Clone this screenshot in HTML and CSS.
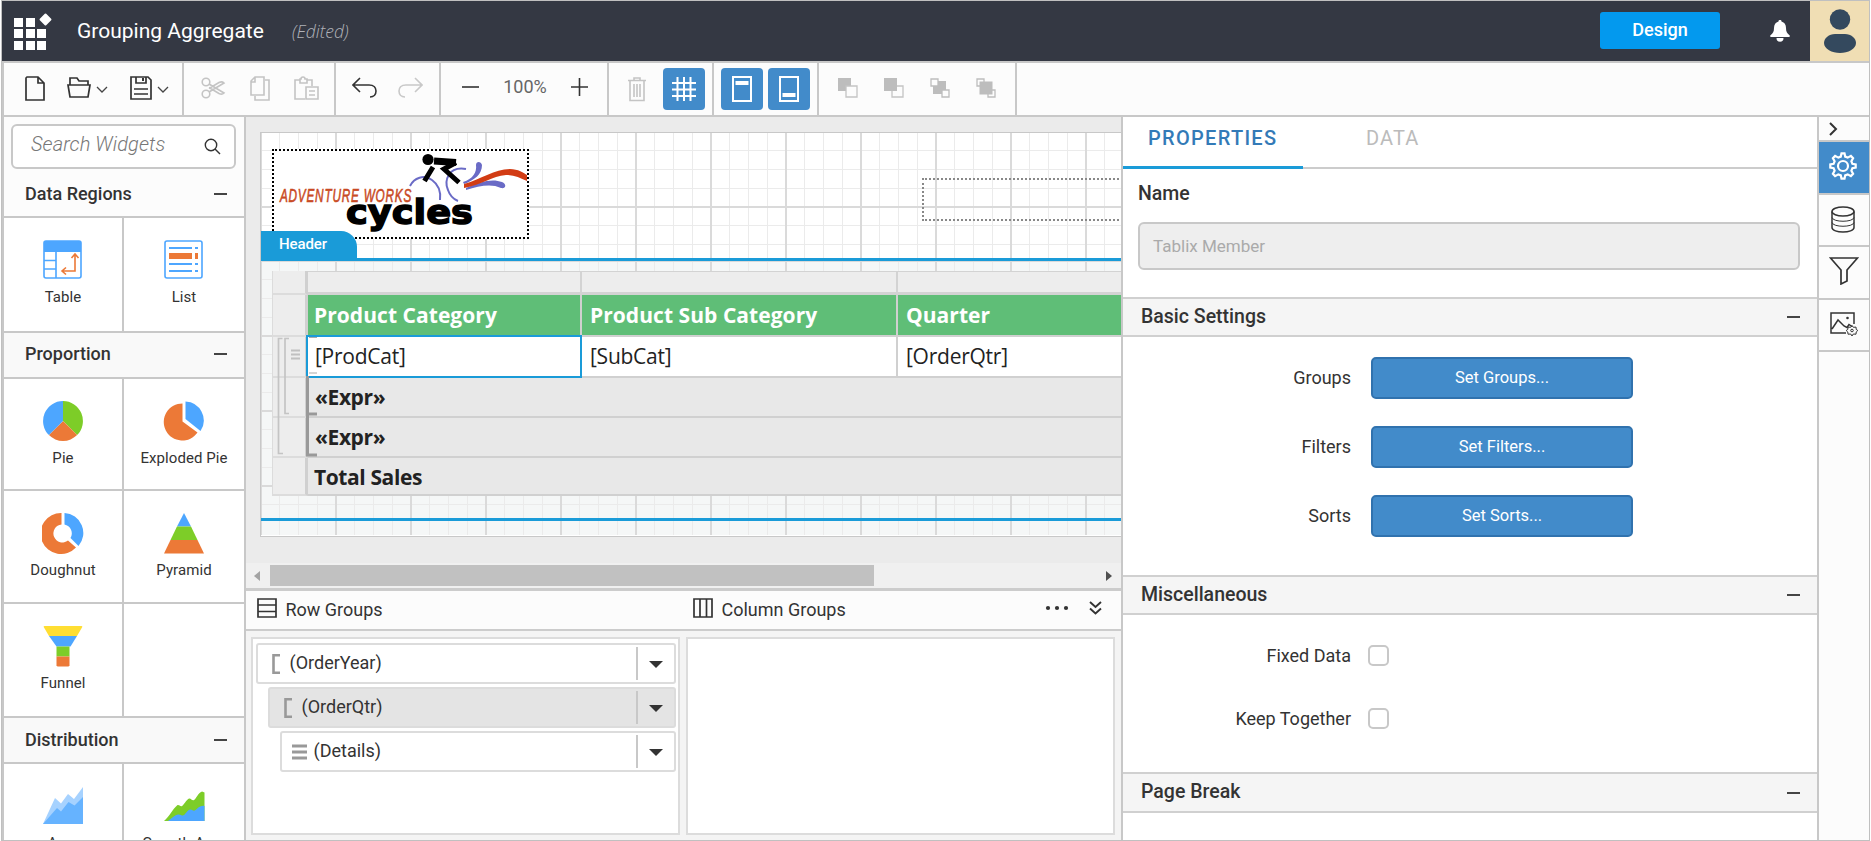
FILE: index.html
```html
<!DOCTYPE html>
<html lang="en">
<head>
<meta charset="utf-8">
<title>Grouping Aggregate</title>
<link rel="stylesheet" href="styles.css">
</head>
<body>
<div class="app">
  <header class="topbar">
    <svg class="brand" width="42" height="40" viewBox="0 0 42 40" fill="#fff"><path d="M2 6h9v9H2zM14 6h9v9h-9zM2 17h9v9H2zM14 17h9v9h-9zM25 17h9v9h-9zM2 29h9v9H2zM14 29h9v9h-9zM25 29h9v9h-9z"/><rect x="29" y="3" width="9" height="9" rx="1" transform="rotate(45 33.5 7.5)"/></svg>
    <h1 class="title">Grouping Aggregate</h1>
    <span class="edited">(Edited)</span>
    <button class="design">Design</button>
    <svg class="bell" width="20" height="22" viewBox="0 0 20 22" fill="#fff"><path d="M10 0c.9 0 1.500.5 1.500 1.400 3 .8 4.500 3.300 4.500 6.600 0 3.600 1 5.500 3.500 7.200.5.500.4 1.800-.5 1.800H1c-.9 0-1-1.300-.5-1.800C3 13.500 4 11.600 4 8c0-3.300 1.500-5.800 4.500-6.600C8.500.5 9.100 0 10 0z"/><path d="M6.500 18h7a3.500 3.800 0 0 1-7 0z"/></svg>
    <div class="avatar"><svg width="59" height="60" viewBox="0 0 59 60" fill="#34495e"><circle cx="30" cy="18.500" r="10.200"/><path d="M25 33h10c6 0 11 4 11 9 0 6-8 10-16 10s-16-4-16-10c0-5 5-9 11-9z"/></svg></div>
  </header>

  <nav class="toolbar">
    <div class="tools file">
      <svg width="20" height="25" viewBox="0 0 20 25" class="ink"><path d="M2 1h11l6 6v17H1V2zM13 1v6h6"/></svg>
      <svg class="open" width="24" height="22" viewBox="0 0 24 22"><path d="M3 8V1h7l2 3h9v4M1 8h22l-2 12H3z" fill="none" stroke="#333" stroke-width="1.700"/></svg>
      <svg class="caret" width="12" height="8" viewBox="0 0 12 8"><path d="M1 1l5 5 5-5" fill="none" stroke="#444" stroke-width="1.300"/></svg>
      <svg class="save" width="22" height="24" viewBox="0 0 22 24"><path d="M1 1h17l3 3v19H1zM6 1v6h10V1M4 13h14M4 18h14" fill="none" stroke="#333" stroke-width="1.700"/><path d="M13 2v3" stroke="#333" stroke-width="2"/></svg>
      <svg class="caret" width="12" height="8" viewBox="0 0 12 8"><path d="M1 1l5 5 5-5" fill="none" stroke="#444" stroke-width="1.300"/></svg>
    </div>
    <div class="tools clip">
      <svg width="25" height="22" viewBox="0 0 25 22" class="dim"><circle cx="5" cy="5" r="3.800"/><circle cx="5" cy="17" r="3.800"/><path d="M8 7l15 9c-1.500 1.500-3 1.500-5 .5L8 10.500M8 15l15-9c-1.500-1.500-3-1.500-5-.5L8 11.500"/></svg>
      <svg width="20" height="25" viewBox="0 0 20 25" class="dim"><path d="M5 1h9v18H1V5zM5 1v5H1M15 4h4v20H5v-4"/></svg>
      <svg width="25" height="25" viewBox="0 0 25 25" class="dim"><path d="M6 4H1v19h10M13 4h5v6M6 7h7V3h-2a2 2 0 0 0-4 0H6zM12 11h12v12H12zM15 15h6M15 19h6"/></svg>
    </div>
    <div class="tools hist">
      <svg width="25" height="22" viewBox="0 0 25 22" class="thin"><path d="M8 1L1 8l7 7M1 8h16c5 0 7 3 7 6s-2 6-6 6"/></svg>
      <svg width="25" height="22" viewBox="0 0 25 22" class="thin faded"><path d="M17 1l7 7-7 7M24 8H8c-5 0-7 3-7 6s2 6 6 6"/></svg>
    </div>
    <div class="tools zoomer">
      <svg width="17" height="18" viewBox="0 0 17 18"><path d="M0 9h17" stroke="#333" stroke-width="1.600"/></svg>
      <span class="pct">100%</span>
      <svg width="18" height="18" viewBox="0 0 18 18"><path d="M0 9h17M8.500 0v18" stroke="#333" stroke-width="1.600"/></svg>
    </div>
    <div class="tools view">
      <svg width="18" height="25" viewBox="0 0 18 25" class="dim"><path d="M0 3.500h18M6 3V1h6v2M2 4v19.500h14V4M6 7v13M9 7v13M12 7v13"/></svg>
      <span class="on"><svg width="26" height="26" viewBox="0 0 26 26"><path d="M6.500 1v24M13 1v24M19.500 1v24M1 7h24M1 13.500h24M1 20h24" stroke="#fff" stroke-width="2"/></svg></span>
    </div>
    <div class="tools bands">
      <span class="on"><svg width="20" height="26" viewBox="0 0 20 26"><path d="M1 1h18v24H1z" fill="none" stroke="#fff" stroke-width="2"/><path d="M3.500 5h13v4h-13z" fill="#fff"/></svg></span>
      <span class="on"><svg width="20" height="26" viewBox="0 0 20 26"><path d="M1 1h18v24H1z" fill="none" stroke="#fff" stroke-width="2"/><path d="M3.500 17h13v4h-13z" fill="#fff"/></svg></span>
    </div>
    <div class="tools order">
      <svg width="20" height="20" viewBox="0 0 20 20"><path d="M0 0h13v13H0z" fill="#bdbdbd"/><path d="M8 8h11v11H8z" fill="#fcfcfc" stroke="#c4c4c4" stroke-width="1.300"/></svg>
      <svg width="20" height="20" viewBox="0 0 20 20"><path d="M8 8h11v11H8z" fill="#fcfcfc" stroke="#c4c4c4" stroke-width="1.300"/><path d="M0 0h13v13H0z" fill="#bdbdbd"/></svg>
      <svg width="20" height="20" viewBox="0 0 20 20"><path d="M3 3h13v13H3z" fill="#bdbdbd"/><path d="M1 1h7v7H1zM12 12h7v7h-7z" fill="#fcfcfc" stroke="#bdbdbd" stroke-width="1.300"/></svg>
      <svg width="20" height="20" viewBox="0 0 20 20"><path d="M1 1h7v7H1zM12 12h7v7h-7z" fill="#fcfcfc" stroke="#bdbdbd" stroke-width="1.300"/><path d="M3.500 3.500h13v13h-13z" fill="#bdbdbd"/></svg>
    </div>
  </nav>

  <main class="body">
    <aside class="widgets">
      <div class="search"><span>Search Widgets</span><svg width="17" height="17" viewBox="0 0 17 17" fill="none" stroke="#333" stroke-width="1.400"><circle cx="7" cy="7" r="5.700"/><path d="M11 11l5 5"/></svg></div>
      <div class="cat first"><span>Data Regions</span><i class="minus"></i></div>
      <div class="tiles">
        <div class="tile"><svg width="42" height="42" viewBox="0 0 42 42"><rect x="2" y="2" width="37" height="37" rx="2" fill="#fff" stroke="#4da6ff" stroke-width="1.600"/><path d="M2 2h37v11H2z" fill="#4da6ff"/><path d="M14 12v27M2 21.500h12M2 30h12" stroke="#4da6ff" stroke-width="1.600"/><path d="M33 15v17H20M29.500 19l3.500-4 3.500 4M24 28.500L20 32l4 3.500" fill="none" stroke="#ec7937" stroke-width="1.600"/></svg><span>Table</span></div>
        <div class="tile"><svg width="42" height="42" viewBox="0 0 42 42"><rect x="2" y="2" width="37" height="37" rx="2" fill="#fff" stroke="#4da6ff" stroke-width="1.600"/><path d="M6 9h23M32 9h3M6 25h23M32 25h3M6 32h23M32 32h3" stroke="#4da6ff" stroke-width="2"/><path d="M6 14h23v6H6zM32 14h3v6h-3z" fill="#ec7937"/></svg><span>List</span></div>
      </div>
      <div class="cat"><span>Proportion</span><i class="minus"></i></div>
      <div class="tiles">
        <div class="tile"><svg width="42" height="42" viewBox="0 0 42 42"><path d="M21 21V1a20 20 0 0 1 14.100 34.100z" fill="#7dcd28"/><path d="M21 21l14.100 14.100a20 20 0 0 1-28.200 0z" fill="#ec7937"/><path d="M21 21L6.900 35.100A20 20 0 0 1 21 1z" fill="#4da6ff"/></svg><span>Pie</span></div>
        <div class="tile"><svg width="42" height="42" viewBox="0 0 42 42"><path d="M19.500 21.500V3.500a18.500 18.500 0 1 0 15 29z" fill="#ec7937"/><path d="M22.500 19V1.500A19 19 0 0 1 37.500 31z" fill="#4da6ff"/></svg><span>Exploded Pie</span></div>
        <div class="tile"><svg width="42" height="42" viewBox="0 0 42 42"><path d="M19.500 1v11.500a9 9 0 1 0 6.500 16l8 7A20.500 20.500 0 1 1 19.500 1z" fill="#ec7937"/><path d="M22.500 1A20 20 0 0 1 36.500 34l-8-8a9 9 0 0 0-6-13.500z" fill="#4da6ff"/></svg><span>Doughnut</span></div>
        <div class="tile"><svg width="42" height="42" viewBox="0 0 42 42"><path d="M21 1l7 13.500H14z" fill="#4da6ff"/><path d="M14 14.500h14L34.500 28h-27z" fill="#7dcd28"/><path d="M7.500 28h27L41 41.500H1z" fill="#ec7937"/></svg><span>Pyramid</span></div>
        <div class="tile"><svg width="42" height="42" viewBox="0 0 42 42"><path d="M2.500 1h37c1 0 1 1 .5 1.500l-5 8.500H7L2 2.500C1.500 2 1.500 1 2.500 1z" fill="#ffde32"/><path d="M7 11h28l-6.500 10.500h-14z" fill="#4da6ff"/><path d="M14.500 21.500h13v10h-13z" fill="#7dcd28"/><path d="M14.500 31.500h13v9l-1 1h-11l-1-1z" fill="#ec7937"/></svg><span>Funnel</span></div>
        <div class="tile"></div>
      </div>
      <div class="cat low"><span>Distribution</span><i class="minus"></i></div>
      <div class="tiles">
        <div class="tile"><svg width="42" height="42" viewBox="0 0 42 42"><path d="M1 39L13 13l6 5.500L26 9l6 5L41 2v37z" fill="#a6d2ff"/><path d="M1 39l14-16 4 3.500L26.500 17l6 3.500L41 12v27z" fill="#66b3ff"/></svg><span>Area</span></div>
        <div class="tile"><svg width="42" height="42" viewBox="0 0 42 42"><path d="M1 36C7 31 9 25 14 20.500c2-1.500 3 1.500 5 .5s4-6 7-7.500c2-.5 3 2.500 5 1.500s4-7 8-8.500l2.500 1V36z" fill="#7dcd28"/><path d="M5 36c4-3 7-6 10-6.500s4 2 6 .5 4-6 6.500-5.500 3 2 5 .5 5-5 9-4v15z" fill="#4da6ff"/></svg><span>Growth Area</span></div>
      </div>
    </aside>

    <section class="center">
      <div class="stage">
        <div class="page">
          <div class="band head">
            <svg class="logo" width="253" height="86" viewBox="0 0 253 86">
              <g fill="none" stroke="#6a6bc6" stroke-width="2"><path d="M136 35c4-8 14-12 22-6 7 5 9 12 8 20"/><path d="M192 18c-18-3-22 12-18 21 2 6 5 9 10 11"/></g>
              <path d="M189 31c10-3 14-10 13-17 0-4 5-4 6 0 0 9-7 15-18 19zM192 37c13-6 26-10 36-6 5 2 4 7-1 6-10-5-22-2-35 2z" fill="#6a6bc6"/>
              <path d="M190 33c18-5 30-15 46-15 8 0 14 4 17 6v6c-7-3-13-6-21-6-14 1-24 10-42 13z" fill="#d23c14"/>
              <circle cx="154" cy="8.500" r="5.600"/>
              <g fill="none" stroke="#000"><path d="M160 10l22 1.500" stroke-width="7"/><path d="M182 11.500L170 18l15 13.500M159 16l-8.500 14" stroke-width="5"/></g>
              <text x="9.500" y="51" class="aw" textLength="212" transform="scale(.62 1)">ADVENTURE WORKS</text>
              <text x="72" y="73" class="cy" textLength="127" lengthAdjust="spacingAndGlyphs">cycles</text>
            </svg>
            <div class="textbox"></div>
            <span class="bandtab">Header</span>
          </div>
          <div class="band main">
            <div class="tablix">
              <div class="gut"></div><div class="colh"></div><div class="colh"></div><div class="colh"></div>
              <div class="gut"></div><div class="th one">Product Category</div><div class="th">Product Sub Category</div><div class="th">Quarter</div>
              <div class="gut"></div><div class="td sel">[ProdCat]</div><div class="td">[SubCat]</div><div class="td">[OrderQtr]</div>
              <div class="gut"></div><div class="sum">«Expr»</div>
              <div class="gut"></div><div class="sum">«Expr»</div>
              <div class="gut"></div><div class="sum last">Total Sales</div>
              <svg class="marks" width="48" height="190" viewBox="0 0 48 190"><path d="M10.500 67.500h-4v115h4.500M17 67.500h-4v75H17" fill="none" stroke="#c4c4c4" stroke-width="1.700"/><path d="M19 79.500h9M19 83.500h9M19 87.500h9" stroke="#c0c0c0" stroke-width="2"/><path d="M34 105h3v36.500h8v3h-8V182.500h8v3H34z" fill="#999"/><path d="M37 66.500h8M37 102h8" stroke="#aaa"/></svg>
            </div>
          </div>
          <div class="band foot"></div>
        </div>
      </div>
      <div class="scroll"><i class="larr"></i><i class="thumb"></i><i class="rarr"></i></div>
      <div class="ghead">
        <div class="gh"><svg width="20" height="20" viewBox="0 0 20 20" class="ink"><path d="M1 1h18v18H1zM1 7h18M1 13.500h18"/></svg><span>Row Groups</span></div>
        <div class="gh"><svg width="20" height="20" viewBox="0 0 20 20" class="ink"><path d="M1 1h18v18H1zM7 1v18M13.500 1v18"/></svg><span>Column Groups</span>
          <svg class="dots" width="24" height="6" viewBox="0 0 24 6" fill="#333"><circle cx="3" cy="3" r="2.100"/><circle cx="12" cy="3" r="2.100"/><circle cx="21" cy="3" r="2.100"/></svg>
          <svg class="down" width="13" height="14" viewBox="0 0 13 14" fill="none" stroke="#333" stroke-width="1.900"><path d="M1 1l5.500 5L12 1M1 7.500l5.500 5 5.500-5"/></svg></div>
      </div>
      <div class="gbody">
        <div class="gbox">
          <div class="item"><svg width="24" height="20" viewBox="0 0 24 20"><path d="M14 1.300H7.500v17.400H14" fill="none" stroke="#999" stroke-width="2.600"/></svg><span>(OrderYear)</span><i class="dd"></i></div>
          <div class="item lv2"><svg width="24" height="20" viewBox="0 0 24 20"><path d="M14 1.300H7.500v17.400H14" fill="none" stroke="#999" stroke-width="2.600"/></svg><span>(OrderQtr)</span><i class="dd"></i></div>
          <div class="item lv3"><svg width="24" height="20" viewBox="0 0 24 20"><path d="M2 4h15M2 10h15M2 16h15" fill="none" stroke="#999" stroke-width="3"/></svg><span>(Details)</span><i class="dd"></i></div>
        </div>
        <div class="gbox"></div>
      </div>
    </section>

    <section class="props">
      <div class="tabs"><span class="tab active">PROPERTIES</span><span class="tab">DATA</span></div>
      <div class="name"><label>Name</label><div class="input">Tablix Member</div></div>
      <div class="sec"><span>Basic Settings</span><i class="minus"></i></div>
      <div class="rows basic">
        <div class="row"><span>Groups</span><button>Set Groups...</button></div>
        <div class="row"><span>Filters</span><button>Set Filters...</button></div>
        <div class="row"><span>Sorts</span><button>Set Sorts...</button></div>
      </div>
      <div class="sec"><span>Miscellaneous</span><i class="minus"></i></div>
      <div class="rows misc">
        <div class="row"><span>Fixed Data</span><i class="check"></i></div>
        <div class="row"><span>Keep Together</span><i class="check"></i></div>
      </div>
      <div class="sec pb"><span>Page Break</span><i class="minus"></i></div>
    </section>

    <aside class="rail">
      <div class="r0"><svg width="9" height="14" viewBox="0 0 9 14"><path d="M1 1l6 6-6 6" fill="none" stroke="#333" stroke-width="2"/></svg></div>
      <div class="r1 active"><svg width="28" height="28" viewBox="-14 -14 28 28" fill="none" stroke="#fff" stroke-width="2.200"><circle r="5"/><path d="M-2.200-9.400L-1.500-12.700H1.500L2.200-9.400 4.700-8.400 7.900-10.100 10.100-7.900 8.400-4.700 9.400-2.200 12.700-1.500V1.500L9.400 2.200 8.400 4.700 10.100 7.900 7.900 10.100 4.700 8.400 2.200 9.400 1.500 12.700H-1.500L-2.200 9.400-4.700 8.400-7.900 10.100-10.100 7.900-8.400 4.700-9.400 2.200-12.700 1.500V-1.500L-9.400-2.200-8.400-4.700-10.100-7.900-7.900-10.100-4.700-8.400z"/></svg></div>
      <div class="r2"><svg width="24" height="27" viewBox="0 0 24 27" fill="none" stroke="#333" stroke-width="1.500"><ellipse cx="12" cy="5.500" rx="11" ry="4.500"/><path d="M1 5.500v16c0 6 22 6 22 0v-16"/><path d="M1 11.500c1 5 21 5 22 0M1 16.500c1 5 21 5 22 0" stroke-width="1"/></svg></div>
      <div class="r3"><svg width="30" height="28" viewBox="0 0 30 28" fill="none" stroke="#333" stroke-width="1.700"><path d="M1.500 1h27L18 13v11l-6 3V13z"/></svg></div>
      <div class="r4"><svg width="28" height="25" viewBox="0 0 28 25" fill="none" stroke="#333" stroke-width="1.500"><path d="M24 12V1H1v20h15M2 17l6-9 6 6 3 1.500 2-3 3 2"/><circle cx="17.500" cy="6" r="1.300" fill="#333" stroke="none"/><circle cx="22" cy="18.500" r="1.300" stroke-width="1"/><path d="M22 13.500l1.300 1.800 2.700-.2.200 2.300 1.600 1.100-1.600 1.500-.2 2.200-2.700-.2L22 24l-1.300-2-2.700.2-.2-2.200-1.600-1.500 1.600-1.100.2-2.300 2.700.2z" stroke-width="1"/></svg></div>
    </aside>
  </main>
</div>
</body>
</html>
```

FILE: styles.css
```css
* { box-sizing: border-box; }
body { margin: 0; background: #fff; font-family: Roboto, "Liberation Sans", sans-serif; color: #333; }
svg { display: block; flex: none; }
button { font-family: inherit; }
.app { margin: 0 1px; width: 1869px; height: 841px; border: 1px solid #c0c0c0; display: flex; flex-direction: column; overflow: hidden; }

.topbar { height: 60px; background: #343843; display: flex; align-items: center; flex: none; color: #fff; }
.brand { margin: 1px 0 0 10px; }
.title { margin: -1px 0 0 23px; font-size: 21px; font-weight: 400; width: 214px; white-space: nowrap; letter-spacing: 0; }
.edited { font: italic 300 17.500px "Open Sans", "Noto Sans", sans-serif; color: #b0b2b8; margin-left: 1px; }
.design { margin: -1px 0 0 auto; width: 120px; height: 37px; border: 0; border-radius: 3px; background: #0399ee; color: #fff; font-size: 18px; font-weight: 500; padding-bottom: 3px; }
.bell { margin: 0 20px 0 50px; }
.avatar { width: 59px; height: 60px; background: #f0deb4; }

.toolbar { height: 56px; flex: none; border: solid #c8c8c8; border-width: 2px 0 2px 2px; background: #fcfcfc; display: flex; }
.tools { border-right: 2px solid #c8c8c8; display: flex; align-items: center; }
.ink { fill: none; stroke: #333; stroke-width: 1.700; }
.dim { fill: none; stroke: #c4c4c4; stroke-width: 1.600; }
.thin { fill: none; stroke: #333; stroke-width: 1.600; }
.faded { stroke: #c8c8c8; }
.file { width: 180px; padding: 0 0 2px 21px; }
.open { margin-left: 22px; }
.caret { margin: 4px 0 0 5px; }
.save { margin-left: 22px; }
.clip { width: 152px; padding: 0 0 2px 17px; gap: 24px; }
.hist { width: 105px; padding: 0 0 2px 16px; gap: 21px; }
.zoomer { width: 168px; padding: 0 0 2px 21px; }
.zoomer svg { margin-top: -2px; }
.pct { width: 92px; text-align: center; font-size: 18px; color: #666; margin-top: -4px; }
.view { width: 105px; padding-left: 19px; gap: 17px; }
.bands { width: 105px; padding-left: 7px; gap: 5px; }
.on { width: 42px; height: 42px; border-radius: 4px; background: #428bca; display: grid; place-items: center; }
.order { width: 198px; padding: 0 0 3px 19px; gap: 26px; }

.body { flex: 1; display: flex; min-height: 0; border-left: 2px solid #c8c8c8; }
.minus { width: 13px; height: 2px; background: #444; }

.widgets { width: 242px; flex: none; border-right: 2px solid #c8c8c8; background: #fcfcfc; overflow: hidden; }
.search { margin: 7px 8px 0 7px; height: 45px; border: 2px solid #c8c8c8; border-radius: 6px; background: #fff; display: flex; align-items: center; justify-content: space-between; padding: 0 13px 0 18px; }
.search span { font-size: 20px; font-style: italic; font-weight: 300; color: #777; margin-top: -5px; letter-spacing: .08px; }
.cat { height: 46px; border-bottom: 2px solid #c8c8c8; background: #f9f9f9; display: flex; align-items: center; justify-content: space-between; padding: 0 17px 2px 21px; font-size: 18px; font-weight: 500; }
.cat.first { height: 49px; background: #fcfcfc; padding: 2px 17px 0 21px; }
.cat.low { padding-bottom: 1px; }
.tiles { display: grid; grid-template-columns: 120px 120px; grid-auto-rows: 112.500px; border-bottom: 2px solid #c8c8c8; background: #fff; }
.tile { display: flex; flex-direction: column; align-items: center; padding-top: 21px; border-bottom: 2px solid #c8c8c8; overflow: hidden; }
.tile:nth-child(odd) { border-right: 2px solid #c8c8c8; }
.tile:nth-last-child(-n+2) { border-bottom: 0; }
.tile span { margin-top: 7px; font-size: 15px; line-height: 18px; letter-spacing: .08px; }

.center { width: 877px; flex: none; border-right: 2px solid #c8c8c8; display: flex; flex-direction: column; overflow: hidden; }
.stage { height: 446px; flex: none; background: #ebebeb; padding: 15px 0 0 14px; overflow: hidden; }
.page { width: 1100px; border: 1px solid #c8c8c8; background: #fff; }
.band { position: relative; border-bottom: 3px solid #1a9bd8;
  background-image:
    linear-gradient(90deg, transparent 73px, #dadada 73px),
    linear-gradient(transparent 73px, #dadada 73px),
    linear-gradient(90deg, transparent 17px, #ebebeb 17px, #ebebeb 18.500px, transparent 18.500px, transparent 36px, #ebebeb 36px, #ebebeb 37.500px, transparent 37.500px, transparent 55px, #ebebeb 55px, #ebebeb 56.500px, transparent 56.500px),
    linear-gradient(transparent 17px, #ebebeb 17px, #ebebeb 18.500px, transparent 18.500px, transparent 36px, #ebebeb 36px, #ebebeb 37.500px, transparent 37.500px, transparent 55px, #ebebeb 55px, #ebebeb 56.500px, transparent 56.500px);
  background-size: 75px 75px; background-position: 1px 0; }
.head { height: 128px; }
.main { height: 260px; background-color: #f5f7f7; background-position: 1px 1px; }
.foot { height: 15px; background-color: #f5f7f7; border-bottom: 1px solid #fff; }
.logo { position: absolute; left: 11px; top: 16px; width: 257px; height: 90px; border: 2px dotted #000; background: #fff; }
.aw { font: italic 400 19px "Liberation Sans", sans-serif; fill: #c94a24; stroke: #c94a24; stroke-width: .6px; }
.cy { font: 700 34px "DejaVu Sans", sans-serif; fill: #000; stroke: #000; stroke-width: 1.500px; }
.textbox { position: absolute; left: 661px; top: 45px; width: 400px; height: 43px; border: 2px dotted #888; }
.bandtab { position: absolute; left: 0; top: 98px; width: 96px; height: 30px; padding-left: 18px; background: #1a9bd8; color: #fff; border-top-right-radius: 16px; font-size: 15px; font-weight: 500; line-height: 26px; letter-spacing: -.1px; }

.tablix { position: absolute; left: 11px; top: 10px; width: 1000px; display: grid; grid-template-columns: 36px 274px 316px 1fr; grid-template-rows: 24px 42px 41px 40px 40px 38px; font: 21px "Open Sans", "Noto Sans", sans-serif; color: #222; }
.gut { background: #ededed; border: solid #dcdcdc; border-width: 0 0 2px 1px; border-right: 3px solid #d0d0d0; }
.colh { background: #ededed; border: solid #d3d3d3; border-width: 1px 2px 3px 0; }
.th, .td, .sum { display: flex; align-items: center; padding: 0 0 1px 8px; border: solid #d0d0d0; border-width: 0 2px 2px 0; white-space: nowrap; }
.th { background: #5fbe77; color: #fff; font-weight: 700; letter-spacing: .05px; }
.th:last-child { letter-spacing: -.2px; }
.th.one { padding-left: 6px; }
.td { background: #fff; letter-spacing: -.25px; }
.sel { margin: -2px 0 0 -2px; padding-left: 7px; border: 2px solid #1a9bd8; z-index: 2; }
.sum { grid-column: 2 / 5; padding-left: 7px; background: #e8e8e8; font-weight: 700; letter-spacing: -.4px; }
.sum.last { padding: 1px 0 0 6px; }
.marks { position: absolute; left: 0; top: 0; z-index: 3; }

.scroll { height: 25px; flex: none; background: #f0f0f0; display: flex; align-items: center; padding: 0 9px 0 8px; }
.larr { border: 5.500px solid transparent; border-left: 0; border-right: 6px solid #a3a3a3; }
.thumb { width: 604px; height: 21px; background: #c1c1c1; margin: 0 auto 0 10px; }
.rarr { border: 5.500px solid transparent; border-right: 0; border-left: 6px solid #505050; }
.ghead { height: 43px; flex: none; border: solid #ccc; border-width: 3px 0 2px; background: #fcfcfc; display: flex; padding-left: 11px; }
.gh { width: 436px; display: flex; align-items: center; gap: 8.500px; font-size: 18px; padding-bottom: 4px; }
.gh + .gh { padding-left: 4px; }
.gh span { margin-top: 3px; }
.dots { margin-left: 190.500px; }
.down { margin-left: 12px; }
.gbody { flex: 1; background: #f4f4f4; display: flex; gap: 6px; padding: 6px 6px 5px 5px; }
.gbox { width: 429px; border: 2px solid #dcdcdc; background: #fff; padding: 4px 2px 0 3px; display: flex; flex-direction: column; gap: 3px; }
.item { height: 41px; border: 2px solid #dcdcdc; border-radius: 3px; display: flex; align-items: center; padding-left: 8px; font-size: 18px; }
.item span { margin: -2px 0 0 -.500px; }
.lv2 { margin-left: 12px; background: #e4e4e4; }
.lv3 { margin-left: 24px; }
.dd { margin-left: auto; width: 38px; height: 33px; border-left: 2px solid #c8c8c8; display: grid; place-items: center; padding: 2px 0 0; }
.dd::before { content: ""; border: 7px solid transparent; border-top-color: #333; border-bottom: 0; }

.props { width: 696px; flex: none; border-right: 2px solid #c8c8c8; background: #fff; }
.tabs { height: 52px; border-bottom: 2px solid #ccc; display: flex; font-size: 20px; letter-spacing: 1.100px; }
.tab { width: 180px; height: 52px; line-height: 43px; padding-left: 25px; color: #bbb; }
.tab.active { color: #337ab7; border-bottom: 3px solid #1a9bd8; font-weight: 500; letter-spacing: 1.300px; }
.tab + .tab { padding-left: 63px; }
.name { height: 128px; padding: 12px 17px 0 15px; }
.name label { display: block; height: 41px; line-height: 25px; font-size: 19.500px; font-weight: 500; }
.input { height: 48px; border: 2px solid #c8c8c8; border-radius: 6px; background: #eee; color: #aaa; font-size: 17px; line-height: 44px; padding-left: 13px; }
.sec { height: 40px; border: solid #d0d0d0; border-width: 2px 0; background: #f5f5f5; display: flex; align-items: center; justify-content: space-between; padding: 0 17px 0 18px; font-size: 19.500px; font-weight: 500; }
.sec span { margin-top: -2px; }
.rows { display: flex; flex-direction: column; }
.basic { height: 238px; padding-top: 20px; gap: 27px; }
.misc { height: 157px; padding-top: 30px; gap: 42px; }
.row { display: flex; align-items: center; gap: 20px; font-size: 18px; }
.row span { width: 228px; text-align: right; }
.basic span { margin-top: -2px; }
.row button { width: 262px; height: 42px; border: 2px solid #3072ae; border-radius: 5px; background: #428bca; color: #fff; font-size: 16.500px; font-weight: 400; padding-bottom: 3px; }
.check { width: 21px; height: 21px; margin-left: -3px; border: 2px solid #c8c8c8; border-radius: 5px; background: #fff; }
.pb { height: 41px; }

.rail { flex: 1; background: #fcfcfc; }
.rail div { border-bottom: 2px solid #c8c8c8; display: flex; align-items: center; padding: 0 0 2px 10px; }
.rail .r0 { height: 25px; padding-bottom: 0; }
.rail .r1 { height: 53px; padding-bottom: 3px; }
.rail .r2 { height: 52px; padding-left: 12px; }
.rail .r3 { height: 53px; padding-bottom: 3px; }
.rail .r4 { height: 52px; padding-left: 11px; }
.rail .active { background: #428bca; }
```
